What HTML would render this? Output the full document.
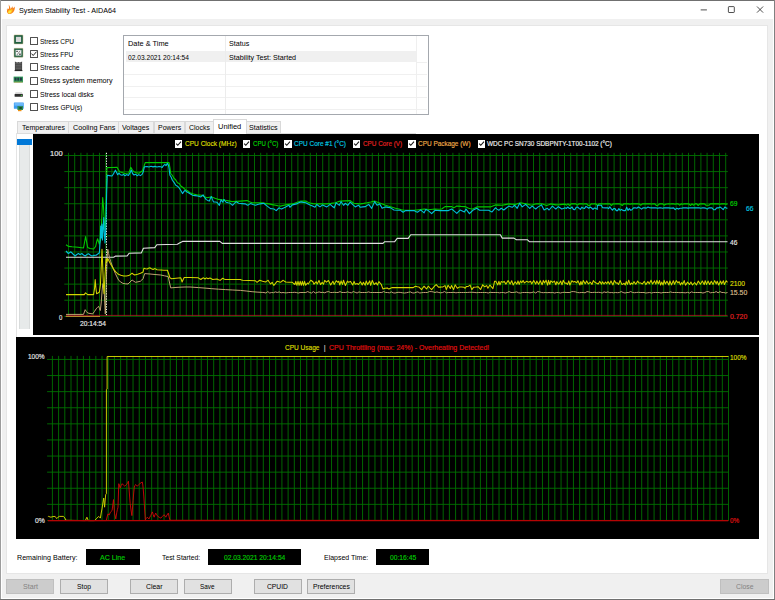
<!DOCTYPE html>
<html lang="en"><head><meta charset="utf-8"><title>System Stability Test - AIDA64</title>
<style>
html,body{margin:0;padding:0}
body{width:775px;height:600px;overflow:hidden;position:relative;background:#f0f0f0;font-family:"Liberation Sans",sans-serif;font-size:7.9px;color:#000}
div,span,svg{position:absolute;box-sizing:border-box}
.t{white-space:pre;line-height:10px;height:10px;transform-origin:0 0}
.k{-webkit-text-stroke:0.18px currentColor}
.btn{background:#e1e1e1;border:1px solid #adadad}
.btn.dis{background:#cccccc;border-color:#bfbfbf}
.cb{width:7.9px;height:7.9px;left:29.75px;background:#fff;border:0.7px solid #505050;border-radius:0.5px}
.lcb{width:7.2px;height:7.2px;top:140.4px;background:#fff}
.tab{top:120.9px;height:12.6px;background:#f0f0f0;border:1px solid #d9d9d9;border-bottom:none}
.blk{background:#000}
.hl{left:124.3px;width:303px;height:0.9px;background:#f0f0f0}

</style></head><body>
<div id="titlebar" style="left:1px;top:1px;width:773px;height:17.8px;background:#fff"></div>
<svg id="appicon" style="left:6px;top:4px" width="10" height="11" viewBox="0 0 10 11">
<path d="M2.6 0.6 C3.6 2.2 4.6 3.2 4.4 5.0 C5.4 4.2 6.0 3.2 6.2 2.2 C6.6 3.0 6.9 3.6 6.9 4.4 C7.6 3.9 8.3 3.2 8.7 2.6 C9.2 5.4 8.2 8.2 5.6 9.6 C3.6 10.6 1.2 9.6 0.9 7.4 C0.8 6.6 1.2 6.0 1.6 5.6 C1.2 5.4 0.8 5.2 0.5 5.2 C1.4 4.4 2.4 4.6 2.9 5.0 C3.2 3.6 2.9 2.0 2.6 0.6 Z" fill="#f7801a"/>
<path d="M3.6 5.8 C4.6 5.4 5.6 5.2 6.6 5.4 C6.6 7.4 5.4 9.2 3.6 9.6 C2.4 9.8 1.6 8.8 1.8 7.8 C2.0 6.8 2.8 6.2 3.6 5.8 Z" fill="#ffc420"/>
<path d="M3.4 7.0 C4.0 6.6 4.8 6.6 5.2 6.8 C5.0 8.0 4.4 9.0 3.4 9.4 C2.6 9.4 2.2 8.8 2.4 8.2 C2.6 7.6 3.0 7.2 3.4 7.0 Z" fill="#ffe84a"/>
</svg>
<svg id="controls" style="left:695px;top:1px" width="79" height="18" viewBox="0 0 79 18">
<path d="M5.7 8.9 H11.9" stroke="#222" stroke-width="0.8" fill="none"/>
<rect x="33.4" y="5.6" width="5.9" height="5.9" rx="0.6" stroke="#222" stroke-width="0.8" fill="none"/>
<path d="M62.0 5.5 L68.1 11.6 M68.1 5.5 L62.0 11.6" stroke="#222" stroke-width="0.8" fill="none"/>
</svg>
<div id="panel" style="left:5.5px;top:25.2px;width:762.4px;height:548.9px;background:#fff;border:1px solid #e6e6e6"></div>
<svg id="icons" style="left:12px;top:32px" width="14" height="82" viewBox="12 32 14 82">
<rect x="14" y="34.9" width="9" height="9" rx="0.6" fill="#1f5f42" stroke="#c8b888" stroke-width="0.5"/>
<rect x="15.9" y="36.8" width="5.2" height="5.2" fill="#d9d9d9"/>
<rect x="14" y="48.3" width="9" height="8.9" rx="0.6" fill="#1f5f42" stroke="#c8b888" stroke-width="0.5"/>
<rect x="15.6" y="49.9" width="5.8" height="5.7" fill="#f4f4f4"/>
<path d="M16.3 50.7 h1.5 v1.4 h-1.5 z M19.2 53.4 h1.5 v1.5 h-1.5 z" fill="#444"/><path d="M20.3 50.6 L16.9 55.0" stroke="#444" stroke-width="0.6" fill="none"/>
<path d="M14.9 61.6 L17 62.6 L18.5 62 L20 62.6 L22.1 61.6 V70.9 H14.9 Z" fill="#4a4a4a"/>
<rect x="15.6" y="63.4" width="5.8" height="6.4" fill="#6a6a6a"/>
<path d="M15.2 64.6 H21.8 M15.2 66.2 H21.8 M15.2 67.8 H21.8 M15.2 69.4 H21.8" stroke="#333" stroke-width="0.6"/>
<rect x="14.6" y="70.2" width="7.8" height="0.9" fill="#222"/>
<rect x="13.6" y="76.6" width="9.4" height="5.9" fill="#2f9a5a"/>
<rect x="14.6" y="77.6" width="1.9" height="3" fill="#234"/>
<rect x="17.3" y="77.6" width="1.9" height="3" fill="#234"/>
<rect x="20" y="77.6" width="1.9" height="3" fill="#234"/>
<path d="M14 82.2 H22.6" stroke="#c8a040" stroke-width="0.6"/>
<path d="M15.6 92.2 H21.9 L22.85 94.2 H14.6 Z" fill="#d4d4d4"/>
<rect x="14.6" y="94.1" width="8.25" height="2.7" rx="0.5" fill="#2e2e2e"/>
<rect x="20.8" y="94.9" width="1.2" height="1" fill="#40d040"/>
<rect x="13.85" y="102.4" width="9.9" height="6.4" rx="0.5" fill="#3a9cf0"/>
<rect x="14.5" y="103" width="8.6" height="2.6" fill="#6cb8fa"/>
<rect x="17.4" y="106.1" width="5.6" height="3.9" fill="#2c8a50"/>
<rect x="19.4" y="107" width="2.4" height="2" fill="#1d4a30"/>
<rect x="18" y="109.9" width="3.5" height="1.3" fill="#f09010"/>
</svg>
<div class="cb" style="top:36.80px"></div>
<div class="cb" style="top:50.10px"></div>
<div class="cb" style="top:63.40px"></div>
<div class="cb" style="top:76.70px"></div>
<div class="cb" style="top:90.00px"></div>
<div class="cb" style="top:103.30px"></div>
<svg style="left:29.75px;top:50.1px" width="8" height="8" viewBox="0 0 8 8"><path d="M1.5 3.6 L3.2 5.5 L6.5 1.7" stroke="#1a1a1a" stroke-width="0.95" fill="none"/></svg>
<div id="list" style="left:123.3px;top:35.2px;width:306px;height:79.7px;background:#fff;border:1px solid #a4a8ae"></div>
<div style="left:126.4px;top:51.2px;width:289.6px;height:11.3px;background:#f0f0f0"></div>
<div class="hl" style="top:74.3px"></div>
<div class="hl" style="top:85.9px"></div>
<div class="hl" style="top:97.4px"></div>
<div class="hl" style="top:109.1px"></div>
<div style="left:225px;top:36.2px;width:0.9px;height:77.6px;background:#ececec"></div>
<div style="left:416.1px;top:36.2px;width:0.9px;height:77.6px;background:#efefef"></div>
<div style="left:417px;top:62.3px;width:10px;height:0.9px;background:#f0f0f0"></div>
<div class="tab" style="left:17.2px;width:51.9px"></div>
<div class="tab" style="left:68.2px;width:51.1px"></div>
<div class="tab" style="left:118.4px;width:36.0px"></div>
<div class="tab" style="left:153.5px;width:31.9px"></div>
<div class="tab" style="left:184.5px;width:29.9px"></div>
<div class="tab" style="left:246.4px;width:34.2px"></div>
<div style="left:16.3px;top:133.2px;width:400px;height:0.9px;background:#dcdcdc"></div>
<div style="left:16.3px;top:133.2px;width:0.9px;height:204px;background:#e4e4e4"></div>
<div style="left:212.6px;top:118.9px;width:34.6px;height:15.2px;background:#fff;border:1px solid #d9d9d9;border-bottom:none"></div>
<div style="left:19px;top:139px;width:11px;height:190.3px;background:#e7eaea;border-left:0.6px solid #d9dcdc;border-right:0.6px solid #d9dcdc"></div>
<div style="left:17.1px;top:139px;width:14.6px;height:6px;background:#0078d7"></div>
<div class="blk" style="left:33.4px;top:134px;width:725.4px;height:200.8px"></div>
<svg id="chart1" style="left:33px;top:134px" width="726" height="201" viewBox="33 134 726 201">
<path d="M68.50 152.8V316.3M74.70 152.8V316.3M80.90 152.8V316.3M87.10 152.8V316.3M93.30 152.8V316.3M99.50 152.8V316.3M105.70 152.8V316.3M111.90 152.8V316.3M118.10 152.8V316.3M124.30 152.8V316.3M130.50 152.8V316.3M136.70 152.8V316.3M142.90 152.8V316.3M149.10 152.8V316.3M155.30 152.8V316.3M161.50 152.8V316.3M167.70 152.8V316.3M173.90 152.8V316.3M180.10 152.8V316.3M186.30 152.8V316.3M192.50 152.8V316.3M198.70 152.8V316.3M204.90 152.8V316.3M211.10 152.8V316.3M217.30 152.8V316.3M223.50 152.8V316.3M229.70 152.8V316.3M235.90 152.8V316.3M242.10 152.8V316.3M248.30 152.8V316.3M254.50 152.8V316.3M260.70 152.8V316.3M266.90 152.8V316.3M273.10 152.8V316.3M279.30 152.8V316.3M285.50 152.8V316.3M291.70 152.8V316.3M297.90 152.8V316.3M304.10 152.8V316.3M310.30 152.8V316.3M316.50 152.8V316.3M322.70 152.8V316.3M328.90 152.8V316.3M335.10 152.8V316.3M341.30 152.8V316.3M347.50 152.8V316.3M353.70 152.8V316.3M359.90 152.8V316.3M366.10 152.8V316.3M372.30 152.8V316.3M378.50 152.8V316.3M384.70 152.8V316.3M390.90 152.8V316.3M397.10 152.8V316.3M403.30 152.8V316.3M409.50 152.8V316.3M415.70 152.8V316.3M421.90 152.8V316.3M428.10 152.8V316.3M434.30 152.8V316.3M440.50 152.8V316.3M446.70 152.8V316.3M452.90 152.8V316.3M459.10 152.8V316.3M465.30 152.8V316.3M471.50 152.8V316.3M477.70 152.8V316.3M483.90 152.8V316.3M490.10 152.8V316.3M496.30 152.8V316.3M502.50 152.8V316.3M508.70 152.8V316.3M514.90 152.8V316.3M521.10 152.8V316.3M527.30 152.8V316.3M533.50 152.8V316.3M539.70 152.8V316.3M545.90 152.8V316.3M552.10 152.8V316.3M558.30 152.8V316.3M564.50 152.8V316.3M570.70 152.8V316.3M576.90 152.8V316.3M583.10 152.8V316.3M589.30 152.8V316.3M595.50 152.8V316.3M601.70 152.8V316.3M607.90 152.8V316.3M614.10 152.8V316.3M620.30 152.8V316.3M626.50 152.8V316.3M632.70 152.8V316.3M638.90 152.8V316.3M645.10 152.8V316.3M651.30 152.8V316.3M657.50 152.8V316.3M663.70 152.8V316.3M669.90 152.8V316.3M676.10 152.8V316.3M682.30 152.8V316.3M688.50 152.8V316.3M694.70 152.8V316.3M700.90 152.8V316.3M707.10 152.8V316.3M713.30 152.8V316.3M719.50 152.8V316.3M725.70 152.8V316.3" stroke="#007000" stroke-width="0.9" fill="none"/>
<path d="M64.3 155.50H727.8M64.3 171.58H727.8M64.3 187.66H727.8M64.3 203.74H727.8M64.3 219.82H727.8M64.3 235.90H727.8M64.3 251.98H727.8M64.3 268.06H727.8M64.3 284.14H727.8M64.3 300.22H727.8M64.3 316.30H727.8" stroke="#007000" stroke-width="0.9" fill="none"/>
<path d="M65.7 316.5H100" stroke="#c89030" stroke-width="0.9" fill="none"/>
<path d="M106.5 152.8V316" stroke="#f0f0f0" stroke-width="1" stroke-dasharray="1.3 1.3" fill="none"/>
<polyline points="66.0,315.4 727.5,315.4" stroke="#b01426" stroke-width="0.8" fill="none" stroke-linejoin="round" />
<polyline points="66.0,257.3 113.7,257.3 115.4,256.1 127.1,256.0 129.1,253.2 141.4,252.9 143.4,248.2 154.8,247.6 156.8,244.7 177.4,244.2 179.5,243.0 182.5,241.4 219.9,241.4 222.2,243.4 383.0,243.4 384.7,241.7 394.7,241.7 397.2,238.4 408.2,238.4 410.7,234.7 500.4,234.7 502.1,238.1 513.9,238.1 516.4,239.7 527.3,239.7 529.3,241.7 727.5,241.7" stroke="#e0e0e0" stroke-width="1.1" fill="none" stroke-linejoin="round" />
<polyline points="66.0,314.4 83.5,314.4 84.4,312.0 85.2,309.7 86.4,311.6 87.7,313.0 90.0,313.5 92.7,313.9 94.4,311.6 96.1,308.9 97.4,307.5 98.6,306.3 99.5,308.6 100.3,310.5 101.2,303.0 102.0,292.0 102.8,283.7 103.4,284.5 104.0,285.4 104.6,300.0 105.3,313.9 105.9,298.0 106.5,275.0 107.1,258.0 107.8,249.3 108.6,253.5 109.5,257.7 110.7,261.6 112.0,265.2 113.7,269.5 115.4,273.6 117.0,277.0 118.7,280.3 120.8,282.0 122.9,283.4 125.5,283.8 128.0,284.0 130.0,282.0 132.1,280.0 133.8,281.2 135.5,282.3 138.0,281.8 140.5,281.2 141.8,280.0 143.1,278.7 143.9,276.0 144.7,273.6 150.0,274.0 155.0,274.5 160.7,275.0 164.5,275.8 168.2,276.6 169.4,282.0 170.7,287.9 175.0,287.5 180.0,287.2 185.0,287.0 190.0,287.0 198.4,287.6 205.0,288.1 211.8,288.7 218.5,289.2 225.3,289.6 232.8,290.0 240.4,290.4 246.2,291.0 252.1,291.7 257.1,292.1 262.2,292.4 264.0,292.5 265.9,293.0 267.8,291.6 269.7,293.0 271.6,292.5 273.5,292.7 275.4,291.9 277.3,292.5 279.2,291.9 281.1,292.8 283.0,292.5 284.9,292.8 286.8,292.8 288.7,292.5 290.6,292.5 292.5,292.5 294.4,292.3 296.3,292.5 298.2,293.0 300.1,292.5 302.0,292.5 303.9,292.5 305.8,292.5 307.7,291.6 309.6,292.5 311.5,293.0 313.4,291.6 315.3,293.0 317.2,292.5 319.1,291.9 321.0,292.5 322.9,292.3 324.8,292.8 326.7,291.9 328.6,291.6 330.5,292.5 332.4,292.5 334.3,292.3 336.2,292.5 338.1,292.5 340.0,291.6 341.9,292.5 343.8,292.5 345.7,292.5 347.6,291.9 349.5,292.5 351.4,292.8 353.3,291.6 355.2,292.3 357.1,293.0 359.0,291.9 360.9,292.5 362.8,292.5 364.7,292.5 366.6,292.5 368.5,291.9 370.4,292.5 372.3,292.5 374.2,292.5 376.1,292.5 378.0,292.5 379.9,292.5 381.8,292.5 383.7,291.6 385.6,292.5 387.5,292.5 389.4,292.8 391.3,291.9 393.2,292.8 395.1,293.0 397.0,292.5 398.9,292.3 400.8,292.5 402.7,292.8 404.6,293.0 406.5,292.7 408.4,292.3 410.3,291.9 412.2,292.8 414.1,293.0 416.0,292.3 417.9,291.9 419.8,293.0 421.7,292.7 423.6,292.5 425.5,292.5 427.4,292.5 429.3,291.6 431.2,291.6 433.1,291.9 435.0,292.5 436.9,291.9 438.8,292.5 440.7,292.8 442.6,292.5 444.5,291.6 446.4,292.8 448.3,292.5 450.2,292.5 452.1,292.5 454.0,292.3 455.9,292.8 457.8,292.5 459.7,292.5 461.6,292.5 463.5,292.5 465.4,292.5 467.3,292.5 469.2,292.3 471.1,292.3 473.0,292.3 474.9,292.5 476.8,292.7 478.7,292.5 480.6,292.5 482.5,292.5 484.4,292.5 486.3,292.5 488.2,293.0 490.1,292.3 492.0,292.5 493.9,292.5 495.8,292.5 497.7,292.5 499.6,292.8 501.5,292.5 503.4,292.5 505.3,293.0 507.2,292.5 509.1,291.6 511.0,292.5 512.9,292.5 514.8,292.3 516.7,291.9 518.6,292.8 520.5,293.0 522.4,292.5 524.3,292.5 526.2,292.5 528.1,292.5 530.0,292.8 531.9,292.5 533.8,291.9 535.7,293.0 537.6,291.6 539.5,291.9 541.4,292.5 543.3,292.7 545.2,292.5 547.1,292.7 549.0,292.5 550.9,292.7 552.8,292.5 554.7,293.0 556.6,292.5 558.5,292.5 560.4,293.0 562.3,292.5 564.2,292.3 566.1,292.5 568.0,292.5 569.9,292.5 571.8,291.6 573.7,291.6 575.6,291.9 577.5,292.5 579.4,292.7 581.3,292.5 583.2,292.5 585.1,292.8 587.0,291.6 588.9,291.9 590.8,292.5 592.7,292.5 594.6,292.3 596.5,292.5 598.4,292.3 600.3,292.5 602.2,293.0 604.1,291.9 606.0,292.5 607.9,291.9 609.8,292.7 611.7,292.5 613.6,292.8 615.5,292.5 617.4,292.7 619.3,292.5 621.2,291.6 623.1,292.5 625.0,293.0 626.9,292.5 628.8,292.5 630.7,291.6 632.6,292.5 634.5,292.7 636.4,292.5 638.3,292.3 640.2,292.5 642.1,292.5 644.0,292.5 645.9,293.0 647.8,292.7 649.7,292.5 651.6,293.0 653.5,292.5 655.4,292.5 657.3,292.5 659.2,292.5 661.1,293.0 663.0,292.5 664.9,292.5 666.8,292.5 668.7,292.5 670.6,291.9 672.5,292.5 674.4,292.5 676.3,292.5 678.2,292.5 680.1,292.7 682.0,292.5 683.9,292.7 685.8,292.8 687.7,292.3 689.6,293.0 691.5,291.9 693.4,292.5 695.3,292.5 697.2,292.5 699.1,292.5 701.0,292.5 702.9,293.0 704.8,292.5 706.7,291.6 708.6,291.6 710.5,292.8 712.4,292.5 714.3,292.5 716.2,291.6 718.1,292.8 720.0,291.6 721.9,292.5 723.8,292.5 725.7,293.0 727.5,292.5" stroke="#c8aa78" stroke-width="0.95" fill="none" stroke-linejoin="round" />
<polyline points="66.0,294.6 84.3,294.6 85.5,292.9 87.7,294.6 93.6,294.6 94.6,288.0 95.2,279.5 95.9,288.0 96.6,293.8 98.0,293.0 99.4,292.0 100.4,285.0 101.2,268.0 102.0,249.3 102.8,268.0 103.4,284.0 104.0,293.8 104.6,283.0 105.2,272.0 106.1,258.5 106.8,262.0 107.8,258.5 109.0,261.0 110.3,263.6 112.0,266.5 113.7,269.4 115.8,271.8 117.9,274.0 120.8,275.2 123.8,276.1 126.3,275.9 128.8,275.6 130.5,274.4 132.1,273.3 133.4,274.2 134.7,275.0 137.6,274.2 140.5,273.3 143.1,272.0 143.9,268.3 145.5,268.8 147.2,269.0 148.5,268.3 149.8,267.8 151.4,268.7 153.1,269.4 155.0,268.6 157.0,269.8 160.7,270.0 164.0,270.2 167.4,270.3 168.6,273.5 169.9,277.8 171.6,278.7 176.0,278.2 180.8,277.8 181.5,280.0 182.1,282.0 183.2,279.5 184.2,277.5 190.0,277.6 198.4,277.8 199.6,278.8 200.9,279.5 202.2,278.4 203.5,277.8 205.0,279.0 206.5,277.9 208.0,278.8 210.0,278.0 212.7,279.5 214.8,279.2 216.9,279.0 218.6,279.8 220.2,280.3 221.5,279.2 222.8,278.3 224.0,279.0 225.3,279.5 232.0,279.5 240.4,279.5 241.6,280.0 242.9,280.3 249.0,280.5 255.5,280.8 256.3,281.6 257.1,282.3 258.4,281.2 259.7,280.3 262.6,281.2 265.5,282.0 266.8,281.1 268.1,280.3 269.3,282.2 270.6,284.0 271.4,283.1 272.2,282.3 273.0,283.9 273.9,285.4 275.6,283.2 277.3,281.2 279.0,281.8 280.6,282.3 281.9,281.2 283.2,280.3 284.4,281.2 285.7,282.0 289.0,282.2 292.4,282.3 293.6,283.5 294.9,284.5 295.8,281.3 296.9,285.3 298.0,281.3 299.1,285.3 300.2,281.3 301.3,285.3 302.4,281.3 303.5,285.3 304.6,281.3 305.7,285.3 307.4,283.0 308.3,284.0 309.5,282.0 310.8,280.3 312.9,281.8 314.0,284.2 316.2,281.7 317.2,284.0 319.0,280.4 320.5,284.6 322.2,282.4 323.5,284.3 324.7,280.4 326.4,282.1 328.5,280.5 330.7,285.0 332.9,281.3 334.1,284.4 336.3,280.7 337.8,282.3 338.8,281.2 339.8,285.0 341.1,281.0 342.5,284.4 343.5,280.2 345.4,285.5 347.4,281.1 348.4,282.3 350.6,281.4 352.7,285.0 354.1,281.4 355.2,284.2 357.3,283.6 358.4,284.5 360.5,281.7 362.2,285.0 363.4,282.3 365.2,285.2 366.2,281.0 367.7,284.6 369.7,280.9 370.7,285.4 372.3,280.4 374.2,284.5 376.2,282.7 377.4,285.0 378.9,281.6 381.3,284.5 382.2,287.0 383.0,289.0 385.0,288.3 387.2,287.9 388.0,288.5 388.9,289.0 390.5,288.2 392.2,287.6 400.0,287.6 413.2,287.6 414.5,286.8 415.7,286.2 417.3,286.7 419.0,287.0 420.3,288.4 421.6,289.6 422.8,287.8 424.1,286.2 425.3,287.7 426.6,289.0 427.4,287.5 428.3,286.2 430.0,288.0 431.6,289.6 433.3,287.6 435.0,285.7 436.2,284.6 438.5,287.1 440.9,287.1 442.9,286.9 445.0,285.6 446.3,289.5 448.1,285.3 450.3,288.5 451.5,285.5 453.6,289.6 455.1,284.8 457.3,288.3 459.7,286.9 461.5,286.9 463.9,287.2 465.1,288.3 466.5,286.4 468.3,286.4 470.1,285.1 471.8,289.6 473.7,287.2 476.2,287.1 478.1,286.7 480.6,289.5 482.7,284.8 484.7,286.8 486.7,285.6 487.9,288.3 489.9,285.0 492.9,288.7 493.8,285.0 494.6,281.2 495.8,281.2 497.8,284.9 498.9,281.3 500.0,284.9 501.3,281.5 503.0,282.4 504.1,281.4 506.0,284.1 508.1,280.6 510.1,284.1 511.7,280.7 513.2,285.0 515.1,281.7 516.9,284.1 518.0,280.9 519.2,284.4 520.4,281.1 521.8,282.7 523.1,280.5 524.4,282.9 526.6,281.3 528.6,282.2 530.6,281.2 531.7,283.9 533.7,280.5 535.7,284.1 536.8,281.1 538.6,284.3 540.3,280.7 542.1,284.8 543.3,280.4 544.5,282.9 546.1,280.3 547.6,285.1 548.5,280.4 549.8,284.3 550.8,280.8 552.8,282.5 554.3,281.0 555.9,284.8 556.8,281.6 558.7,284.2 560.7,281.1 562.0,284.8 563.2,280.3 564.6,283.1 566.3,283.1 567.5,284.4 568.8,280.9 569.9,285.0 571.9,280.7 573.3,282.1 574.7,281.5 576.8,282.8 577.9,280.7 579.9,285.0 580.9,281.5 582.0,284.6 583.3,280.5 585.2,283.8 586.7,280.9 588.4,283.9 590.4,282.2 592.0,284.4 593.3,280.6 594.4,282.0 596.2,283.0 598.2,284.0 599.7,281.4 601.5,284.1 602.5,281.7 604.0,284.0 605.5,282.0 606.8,283.8 608.0,281.5 609.5,284.1 611.0,280.9 613.0,284.9 614.4,280.5 616.1,283.2 617.2,282.8 618.5,284.5 620.1,280.5 622.0,284.6 624.1,283.2 625.2,285.0 626.2,281.6 627.5,284.3 628.7,280.2 630.2,284.7 631.4,283.0 632.8,284.1 633.9,281.6 635.8,284.2 637.7,281.1 638.9,283.0 640.6,282.9 642.3,284.0 644.3,281.4 645.8,284.6 647.9,281.6 649.3,283.8 651.0,280.3 652.6,284.0 654.5,280.9 655.9,284.1 656.9,280.4 658.3,283.7 659.5,280.6 660.6,285.1 661.7,282.1 663.1,285.0 664.1,280.3 665.3,283.9 667.0,281.3 668.9,285.0 669.9,281.0 671.5,284.9 673.3,280.8 674.6,284.3 676.2,280.6 678.0,282.9 679.1,281.6 680.4,284.9 681.7,282.6 682.7,284.3 684.2,280.6 685.5,285.2 687.6,282.1 689.5,284.5 690.9,282.0 692.5,285.0 694.6,282.5 696.4,285.0 698.3,281.1 700.4,284.3 702.3,281.0 704.2,284.6 705.2,280.7 706.6,284.4 708.0,281.1 709.7,284.5 711.3,281.3 713.1,284.4 714.7,280.6 716.2,283.9 717.2,281.3 718.7,285.0 720.6,281.1 721.6,284.0 723.4,280.8 724.4,284.5 726.2,280.8 727.5,282.4" stroke="#d4d400" stroke-width="1.05" fill="none" stroke-linejoin="round" />
<polyline points="66.0,244.8 68.4,246.4 72.0,246.8 78.0,247.2 83.5,248.0 85.6,236.5 87.7,247.6 90.0,248.5 93.6,249.0 95.6,246.5 96.6,242.0 97.6,238.7 98.5,241.5 99.3,244.0 100.6,240.0 101.6,222.0 102.7,197.5 103.5,207.0 104.3,222.0 105.0,230.0 105.8,215.0 106.4,192.0 106.9,167.6 112.0,167.5 117.0,167.3 119.6,171.8 122.0,172.6 124.6,173.5 128.8,173.0 130.8,167.3 132.2,169.5 133.8,171.8 136.0,172.6 138.9,173.2 142.2,171.0 143.8,167.0 145.2,162.6 150.0,162.6 158.0,162.6 165.0,162.6 169.0,162.6 170.0,168.0 170.7,173.5 172.4,175.5 174.0,178.2 175.8,180.0 177.4,182.7 179.2,183.5 180.8,186.0 183.0,187.5 185.0,189.4 187.5,190.8 190.0,192.7 193.5,194.0 196.7,194.9 201.8,195.2 204.0,196.6 206.8,197.7 209.5,197.2 211.8,196.9 215.0,198.2 218.6,199.4 222.0,199.9 225.3,200.2 228.6,200.9 232.0,201.6 236.0,201.4 240.4,201.1 243.5,200.9 247.1,200.6 249.5,201.8 252.1,202.8 257.0,202.8 262.2,202.8 265.5,203.4 268.9,203.9 272.2,204.6 275.6,205.3 278.0,205.8 280.6,206.1 283.0,205.5 285.7,204.9 289.0,204.4 292.4,203.9 296.6,202.5 300.8,201.1 303.3,201.1 305.8,201.1 308.0,202.2 310.0,203.0 313.0,203.6 316.7,203.9 321.0,203.9 326.8,203.9 331.0,203.4 335.2,202.8 337.6,201.9 340.2,201.1 345.0,200.9 350.3,200.6 352.0,202.0 353.6,203.3 357.0,203.6 360.3,203.9 363.6,203.4 367.0,202.8 370.8,202.0 374.6,201.1 377.5,202.2 380.5,203.3 383.0,204.3 385.5,205.3 388.8,206.3 392.2,207.3 395.5,208.2 398.9,209.0 401.5,209.7 404.0,210.3 409.0,210.3 414.0,210.3 419.0,209.7 424.1,209.0 427.5,209.3 430.8,209.5 435.0,209.0 438.0,209.3 441.7,209.0 443.4,207.8 445.0,206.6 448.4,206.6 451.8,206.6 453.5,207.8 455.2,207.0 456.8,206.1 461.0,206.4 465.2,206.6 467.0,207.5 468.6,208.3 470.7,208.7 472.8,209.0 474.8,208.0 476.9,206.9 483.6,206.9 490.4,206.9 492.9,205.9 495.4,204.9 498.8,205.1 502.1,205.3 505.4,204.6 508.8,203.9 512.2,204.2 515.5,204.4 518.0,203.6 520.6,202.8 523.5,203.4 526.4,203.9 529.0,204.6 531.5,205.3 533.6,204.6 535.7,203.9 539.0,203.9 542.4,203.9 544.5,204.8 546.6,205.6 548.7,204.8 550.8,203.9 553.3,204.4 555.8,204.9 560.0,204.6 565.0,204.1 566.5,205.2 568.0,203.9 569.6,205.5 571.1,203.9 572.7,203.9 574.2,203.9 575.8,203.9 577.3,205.2 578.9,203.9 580.4,203.9 582.0,203.9 583.5,204.0 585.1,203.9 586.6,203.9 588.2,205.5 589.7,205.5 591.3,203.9 592.8,204.0 594.4,203.9 595.9,203.9 597.5,205.5 599.0,203.9 600.6,203.9 602.1,203.9 603.7,204.0 605.2,203.9 606.8,203.9 608.3,203.9 609.9,203.9 611.4,205.5 613.0,203.9 614.5,204.0 616.1,203.9 617.6,203.9 619.2,203.9 620.7,204.2 622.3,205.5 623.8,203.9 625.4,203.9 626.9,203.9 628.5,203.9 630.0,204.2 631.6,203.9 633.1,203.9 634.7,203.9 636.2,203.9 637.8,203.9 639.3,204.0 640.9,205.2 642.4,203.9 644.0,203.9 645.5,203.9 647.1,203.9 648.6,203.9 650.2,203.9 651.7,204.0 653.3,203.9 654.8,203.9 656.4,205.5 657.9,205.2 659.5,203.9 661.0,203.9 662.6,203.9 664.1,205.2 665.7,204.2 667.2,204.0 668.8,203.9 670.3,204.0 671.9,203.9 673.4,203.9 675.0,204.2 676.5,203.9 678.1,203.9 679.6,205.2 681.2,203.9 682.7,204.2 684.3,203.9 685.8,203.9 687.4,203.9 688.9,203.9 690.5,205.5 692.0,203.9 693.6,205.2 695.1,203.9 696.7,203.9 698.2,205.5 699.8,203.9 701.3,203.9 702.9,203.9 704.4,203.9 706.0,205.2 707.5,205.2 709.1,205.2 710.6,203.9 712.2,203.9 713.7,203.9 715.3,203.9 716.8,203.9 718.4,203.9 719.9,204.2 721.5,203.9 723.0,203.9 724.6,203.9 726.1,204.2 727.5,203.9" stroke="#00c800" stroke-width="1.1" fill="none" stroke-linejoin="round" />
<polyline points="66.0,251.0 68.4,253.5 70.9,251.8 73.0,254.0 75.1,256.0 76.8,254.5 78.5,253.5 80.0,254.6 81.8,253.5 83.5,255.0 85.2,256.0 86.8,254.6 88.5,253.8 90.2,255.0 91.9,256.0 94.0,255.4 96.1,255.2 97.8,254.0 99.4,252.7 100.2,240.0 100.7,226.0 101.3,238.0 101.9,224.0 102.5,240.0 103.1,228.0 103.7,217.5 104.3,232.0 105.0,243.0 105.6,232.0 106.2,215.0 106.6,195.0 107.2,175.2 109.5,175.6 112.0,176.0 113.4,174.0 115.4,170.2 116.6,172.6 117.6,174.8 119.0,173.0 120.4,174.8 122.0,175.2 123.6,174.4 125.0,175.8 126.6,174.6 128.4,175.4 130.0,173.0 131.3,170.0 132.6,173.5 134.0,175.0 135.6,174.2 137.2,175.8 138.8,174.6 140.4,175.6 142.0,174.4 143.2,172.0 144.4,166.8 147.0,166.5 149.0,167.0 151.0,166.3 153.0,166.9 155.0,166.4 157.0,167.0 159.0,166.5 160.7,166.8 162.2,167.4 163.5,165.6 164.9,164.3 166.0,165.6 167.4,163.4 168.4,165.0 169.0,168.0 169.9,175.2 171.2,177.2 172.4,180.2 174.0,182.4 175.8,185.2 177.5,186.2 179.1,187.8 180.8,190.5 182.5,193.6 183.8,191.6 185.0,190.3 187.0,192.0 188.4,192.7 190.5,194.0 192.6,195.2 195.0,195.6 197.6,196.0 199.3,196.4 200.9,196.9 202.0,195.8 203.1,194.9 204.5,197.2 206.0,199.4 207.6,200.4 209.3,201.1 210.3,198.6 211.3,196.5 212.4,199.4 213.5,201.9 215.2,202.0 216.9,202.2 218.2,203.8 219.4,205.3 220.2,202.4 221.1,199.9 222.0,201.2 222.8,202.2 223.4,200.6 223.9,199.4 225.0,201.0 226.1,202.2 228.2,202.8 230.3,203.3 231.4,204.4 232.5,205.3 234.4,203.4 236.2,201.6 237.5,202.6 238.7,203.3 242.0,203.6 245.4,203.9 246.7,204.7 247.9,205.3 249.2,204.4 250.4,203.6 253.0,204.5 255.5,205.3 257.6,204.6 259.7,203.9 261.8,203.6 263.9,203.3 265.5,204.8 267.2,206.1 268.9,207.4 270.6,208.6 272.2,208.8 273.9,209.0 275.2,209.9 276.4,210.6 277.7,209.2 279.0,207.8 280.2,208.4 281.5,209.0 283.6,207.9 285.7,206.9 287.4,206.0 289.0,205.3 289.5,206.4 289.9,207.3 291.2,206.0 292.4,204.9 294.5,204.4 296.6,203.9 298.7,202.8 300.8,201.9 303.3,202.4 305.8,202.8 308.0,203.9 310.0,204.9 312.5,206.0 315.0,207.3 315.9,205.8 316.7,204.4 318.4,205.7 320.0,206.9 321.3,205.9 322.6,204.9 324.7,205.9 326.8,206.9 328.5,205.6 330.1,204.4 332.2,206.2 334.3,207.8 335.2,205.2 336.0,202.8 337.7,204.1 339.4,205.3 340.2,203.4 341.0,201.6 342.3,203.5 343.6,205.3 344.4,204.3 345.2,203.3 346.5,204.3 347.8,205.3 349.0,203.7 350.3,202.2 352.8,204.6 355.3,206.9 357.0,206.1 358.7,205.3 359.5,206.3 360.3,207.3 362.8,206.9 365.4,206.6 367.0,205.5 368.7,204.4 370.2,206.4 371.7,208.3 373.2,204.9 374.6,201.6 375.9,203.5 377.1,205.3 378.4,204.6 379.6,203.9 380.9,206.1 382.1,208.3 383.8,207.6 385.5,206.9 388.0,207.4 390.5,207.8 392.2,208.9 393.9,210.0 397.2,210.2 400.6,210.3 401.8,211.3 403.1,212.3 404.4,211.4 405.6,210.6 409.8,210.6 414.0,210.6 415.7,211.5 417.4,212.3 419.0,211.1 420.7,210.0 422.4,211.4 424.1,212.8 425.0,211.1 425.8,209.5 427.0,210.1 428.3,210.6 430.0,212.2 431.6,213.7 433.3,212.0 435.0,210.3 437.5,210.5 440.0,210.6 444.0,210.6 448.4,210.6 450.1,209.8 451.8,209.0 454.3,211.2 456.8,213.3 458.5,211.6 460.2,210.0 462.3,211.0 464.4,212.0 465.2,210.5 466.0,209.0 467.7,211.4 469.4,213.7 471.1,212.0 472.8,210.3 474.8,209.3 476.9,208.3 478.2,209.3 479.5,210.3 484.0,210.3 488.7,210.3 490.4,211.2 492.0,212.0 493.7,209.9 495.4,207.8 497.1,209.1 498.8,210.3 500.0,209.3 501.3,208.3 502.6,209.2 503.8,210.0 506.3,208.0 508.8,206.1 510.5,206.7 512.2,207.3 513.4,206.3 514.7,205.3 516.0,206.8 517.2,208.3 518.4,205.8 519.7,203.3 521.0,205.1 522.2,206.9 523.9,205.6 525.6,204.4 527.7,206.4 529.8,208.3 531.0,207.2 532.3,206.1 534.0,207.6 535.7,209.0 537.0,207.9 538.2,206.9 539.9,205.9 541.5,204.9 542.8,207.5 544.1,210.0 545.8,209.1 547.4,208.3 548.2,209.2 549.1,210.0 550.8,208.0 552.4,206.1 554.1,207.6 555.8,209.0 557.0,207.8 558.3,206.6 560.0,207.8 561.7,209.0 563.4,208.4 565.0,207.8 566.4,208.4 567.8,207.0 569.2,208.4 570.6,208.4 572.0,207.0 573.4,209.4 574.8,209.8 576.2,207.2 577.6,207.0 579.0,208.4 580.4,209.4 581.8,207.2 583.2,208.3 584.6,208.4 586.0,206.4 587.4,207.2 588.8,208.3 590.2,207.0 591.6,208.0 593.0,209.4 594.4,208.0 595.8,208.4 597.2,209.4 597.4,205.5 599.0,205.3 601.3,205.3 602.6,207.8 605.0,207.9 607.7,207.9 608.6,208.6 609.8,206.8 611.1,208.6 612.4,210.2 613.7,208.6 615.0,208.6 616.3,210.6 617.6,210.6 618.9,208.6 620.2,210.4 621.5,209.4 622.8,210.4 624.1,210.6 625.4,210.6 626.7,207.2 628.0,210.4 629.3,208.6 630.6,210.2 632.0,209.7 633.6,207.9 635.2,207.7 636.8,208.2 638.4,207.0 640.0,207.9 641.6,209.1 643.2,207.7 644.8,207.9 646.4,208.1 648.0,207.0 649.6,207.7 651.2,207.9 652.8,207.9 654.4,207.9 656.0,207.9 657.6,208.2 659.2,207.9 660.8,207.7 662.4,208.2 664.0,207.9 665.6,207.9 667.2,207.9 668.8,207.9 670.4,208.1 672.0,208.1 673.6,207.9 675.2,209.7 676.8,208.2 678.4,209.1 680.0,208.2 681.6,208.2 683.2,207.9 684.8,207.9 686.4,207.9 688.0,208.1 689.6,207.9 691.2,207.7 692.8,207.9 694.4,207.9 696.0,207.7 697.6,207.9 699.2,207.9 700.8,208.2 702.4,207.9 704.0,207.9 705.6,208.1 707.2,209.1 708.8,207.9 710.4,207.9 712.0,207.9 713.6,209.7 715.2,209.7 716.8,207.9 718.4,207.9 720.0,207.0 721.6,208.1 723.2,209.7 724.8,207.0 726.4,208.1 727.5,208.2" stroke="#00c0d8" stroke-width="1.1" fill="none" stroke-linejoin="round" />
</svg>
<div class="lcb" style="left:174.8px"></div>
<svg style="left:174.8px;top:140.4px" width="7.2" height="7.2" viewBox="0 0 7.2 7.2"><path d="M1.2 3.6 L2.8 5.3 L6.0 1.7" stroke="#111" stroke-width="1.05" fill="none"/></svg>
<div class="lcb" style="left:243.0px"></div>
<svg style="left:243.0px;top:140.4px" width="7.2" height="7.2" viewBox="0 0 7.2 7.2"><path d="M1.2 3.6 L2.8 5.3 L6.0 1.7" stroke="#111" stroke-width="1.05" fill="none"/></svg>
<div class="lcb" style="left:284.4px"></div>
<svg style="left:284.4px;top:140.4px" width="7.2" height="7.2" viewBox="0 0 7.2 7.2"><path d="M1.2 3.6 L2.8 5.3 L6.0 1.7" stroke="#111" stroke-width="1.05" fill="none"/></svg>
<div class="lcb" style="left:352.6px"></div>
<svg style="left:352.6px;top:140.4px" width="7.2" height="7.2" viewBox="0 0 7.2 7.2"><path d="M1.2 3.6 L2.8 5.3 L6.0 1.7" stroke="#111" stroke-width="1.05" fill="none"/></svg>
<div class="lcb" style="left:408.4px"></div>
<svg style="left:408.4px;top:140.4px" width="7.2" height="7.2" viewBox="0 0 7.2 7.2"><path d="M1.2 3.6 L2.8 5.3 L6.0 1.7" stroke="#111" stroke-width="1.05" fill="none"/></svg>
<div class="lcb" style="left:478.1px"></div>
<svg style="left:478.1px;top:140.4px" width="7.2" height="7.2" viewBox="0 0 7.2 7.2"><path d="M1.2 3.6 L2.8 5.3 L6.0 1.7" stroke="#111" stroke-width="1.05" fill="none"/></svg>
<div class="blk" style="left:16.2px;top:337.4px;width:742.6px;height:201.2px"></div>
<svg id="chart2" style="left:16px;top:337px" width="743" height="202" viewBox="16 337 743 202">
<path d="M52.40 355.9V520.5M58.60 355.9V520.5M64.81 355.9V520.5M71.01 355.9V520.5M77.21 355.9V520.5M83.41 355.9V520.5M89.62 355.9V520.5M95.82 355.9V520.5M102.02 355.9V520.5M108.23 355.9V520.5M114.43 355.9V520.5M120.63 355.9V520.5M126.84 355.9V520.5M133.04 355.9V520.5M139.24 355.9V520.5M145.44 355.9V520.5M151.65 355.9V520.5M157.85 355.9V520.5M164.05 355.9V520.5M170.26 355.9V520.5M176.46 355.9V520.5M182.66 355.9V520.5M188.87 355.9V520.5M195.07 355.9V520.5M201.27 355.9V520.5M207.48 355.9V520.5M213.68 355.9V520.5M219.88 355.9V520.5M226.08 355.9V520.5M232.29 355.9V520.5M238.49 355.9V520.5M244.69 355.9V520.5M250.90 355.9V520.5M257.10 355.9V520.5M263.30 355.9V520.5M269.50 355.9V520.5M275.71 355.9V520.5M281.91 355.9V520.5M288.11 355.9V520.5M294.32 355.9V520.5M300.52 355.9V520.5M306.72 355.9V520.5M312.93 355.9V520.5M319.13 355.9V520.5M325.33 355.9V520.5M331.53 355.9V520.5M337.74 355.9V520.5M343.94 355.9V520.5M350.14 355.9V520.5M356.35 355.9V520.5M362.55 355.9V520.5M368.75 355.9V520.5M374.96 355.9V520.5M381.16 355.9V520.5M387.36 355.9V520.5M393.56 355.9V520.5M399.77 355.9V520.5M405.97 355.9V520.5M412.17 355.9V520.5M418.38 355.9V520.5M424.58 355.9V520.5M430.78 355.9V520.5M436.99 355.9V520.5M443.19 355.9V520.5M449.39 355.9V520.5M455.59 355.9V520.5M461.80 355.9V520.5M468.00 355.9V520.5M474.20 355.9V520.5M480.41 355.9V520.5M486.61 355.9V520.5M492.81 355.9V520.5M499.02 355.9V520.5M505.22 355.9V520.5M511.42 355.9V520.5M517.62 355.9V520.5M523.83 355.9V520.5M530.03 355.9V520.5M536.23 355.9V520.5M542.44 355.9V520.5M548.64 355.9V520.5M554.84 355.9V520.5M561.05 355.9V520.5M567.25 355.9V520.5M573.45 355.9V520.5M579.65 355.9V520.5M585.86 355.9V520.5M592.06 355.9V520.5M598.26 355.9V520.5M604.47 355.9V520.5M610.67 355.9V520.5M616.87 355.9V520.5M623.08 355.9V520.5M629.28 355.9V520.5M635.48 355.9V520.5M641.69 355.9V520.5M647.89 355.9V520.5M654.09 355.9V520.5M660.29 355.9V520.5M666.50 355.9V520.5M672.70 355.9V520.5M678.90 355.9V520.5M685.11 355.9V520.5M691.31 355.9V520.5M697.51 355.9V520.5M703.72 355.9V520.5M709.92 355.9V520.5M716.12 355.9V520.5M722.32 355.9V520.5M728.53 355.9V520.5" stroke="#007000" stroke-width="0.9" fill="none"/>
<path d="M47.1 359.45H728.5M47.1 375.55H728.5M47.1 391.65H728.5M47.1 407.75H728.5M47.1 423.85H728.5M47.1 439.95H728.5M47.1 456.05H728.5M47.1 472.15H728.5M47.1 488.25H728.5M47.1 504.35H728.5M47.1 520.45H728.5" stroke="#007000" stroke-width="0.9" fill="none"/>
<polyline points="47.9,516.6 48.4,516.4 50.9,517.2 53.0,516.6 55.1,516.4 56.7,518.6 58.0,517.2 59.3,516.4 63.5,516.4 64.8,518.0 66.0,520.3 85.3,520.6 86.9,517.2 88.3,520.6 94.5,520.6 96.2,518.9 98.7,516.4 100.4,518.1 101.2,513.0 102.0,508.9 102.9,503.0 103.7,498.0 104.2,503.0 104.6,507.2 105.2,500.0 105.7,494.6 106.4,493.8 106.4,389.5 107.1,389.0 107.1,356.5 728.5,356.5" stroke="#d2d200" stroke-width="0.95" fill="none" stroke-linejoin="round" />
<polyline points="47.9,520.6 106.2,520.6 107.9,513.9 109.2,515.0 110.4,512.2 112.1,510.5 112.8,505.0 113.5,499.6 114.0,507.0 114.6,513.9 115.2,516.0 115.8,518.9 116.8,512.2 117.4,509.5 118.0,507.2 118.4,495.0 118.8,483.7 119.5,486.0 120.2,487.9 121.2,485.5 122.2,483.7 123.5,485.2 124.7,486.2 126.0,484.8 127.2,483.7 127.8,482.4 128.4,481.2 128.9,487.0 129.5,495.0 130.2,503.8 131.0,510.0 131.9,515.6 132.5,508.0 133.1,500.5 133.7,493.0 134.3,487.0 135.0,485.5 135.6,484.5 136.4,485.5 137.3,486.2 138.5,484.8 139.8,483.7 141.0,482.8 142.3,482.0 142.8,485.0 143.2,488.7 143.8,496.0 144.3,503.8 144.8,512.0 145.3,519.8 146.3,518.4 147.3,517.2 148.2,518.2 149.0,518.9 149.8,517.2 150.7,515.6 151.5,513.7 152.4,511.9 153.2,514.6 154.1,517.2 154.9,515.0 155.7,513.1 156.7,514.8 157.8,516.4 159.3,517.3 160.8,518.1 162.4,516.4 164.1,514.7 165.0,516.0 165.8,517.2 167.0,515.0 168.3,513.1 169.1,516.8 170.0,520.3 728.5,520.6" stroke="#d20808" stroke-width="0.9" fill="none" stroke-linejoin="round" />
<path d="M47.9 520.6H728" stroke="#b40404" stroke-width="1.2" fill="none"/>
</svg>
<div class="blk" style="left:85.7px;top:548.8px;width:53.9px;height:15.9px"></div>
<div class="blk" style="left:207.8px;top:548.8px;width:93.3px;height:15.9px"></div>
<div class="blk" style="left:375.6px;top:548.8px;width:53.5px;height:15.9px"></div>
<div class="btn dis" style="left:6.2px;top:579.4px;width:48.3px;height:14.3px"></div>
<div class="btn" style="left:60.4px;top:579.4px;width:48.1px;height:14.3px"></div>
<div class="btn" style="left:129.6px;top:579.4px;width:48.8px;height:14.3px"></div>
<div class="btn" style="left:183.8px;top:579.4px;width:48.4px;height:14.3px"></div>
<div class="btn" style="left:253.5px;top:579.4px;width:48.1px;height:14.3px"></div>
<div class="btn" style="left:307.0px;top:579.4px;width:48.4px;height:14.3px"></div>
<div class="btn dis" style="left:719.8px;top:579.4px;width:49.1px;height:14.3px"></div>
<span class="t" style="left:18.50px;top:5.76px;transform:scaleX(0.911);">System Stability Test - AIDA64</span>
<span class="t" style="left:39.80px;top:36.56px;transform:scaleX(0.827);">Stress CPU</span>
<span class="t" style="left:39.80px;top:49.86px;transform:scaleX(0.825);">Stress FPU</span>
<span class="t" style="left:39.80px;top:63.16px;transform:scaleX(0.866);">Stress cache</span>
<span class="t" style="left:39.80px;top:76.46px;transform:scaleX(0.904);">Stress system memory</span>
<span class="t" style="left:39.80px;top:89.76px;transform:scaleX(0.883);">Stress local disks</span>
<span class="t" style="left:39.80px;top:103.06px;transform:scaleX(0.832);">Stress GPU(s)</span>
<span class="t" style="left:128.40px;top:38.96px;transform:scaleX(0.937);">Date &amp; Time</span>
<span class="t" style="left:229.00px;top:38.96px;transform:scaleX(0.907);">Status</span>
<span class="t" style="left:128.40px;top:52.56px;transform:scaleX(0.841);">02.03.2021 20:14:54</span>
<span class="t" style="left:229.00px;top:52.56px;transform:scaleX(0.907);">Stability Test: Started</span>
<span class="t" style="left:21.70px;top:122.66px;transform:scaleX(0.889);">Temperatures</span>
<span class="t" style="left:72.70px;top:122.66px;transform:scaleX(0.912);">Cooling Fans</span>
<span class="t" style="left:122.40px;top:122.66px;transform:scaleX(0.902);">Voltages</span>
<span class="t" style="left:157.80px;top:122.66px;transform:scaleX(0.882);">Powers</span>
<span class="t" style="left:188.80px;top:122.66px;transform:scaleX(0.882);">Clocks</span>
<span class="t" style="left:218.40px;top:121.66px;transform:scaleX(0.945);">Unified</span>
<span class="t" style="left:249.30px;top:122.66px;transform:scaleX(0.903);">Statistics</span>
<span class="t" style="left:16.50px;top:553.26px;transform:scaleX(0.902);">Remaining Battery:</span>
<span class="t k" style="left:100.10px;top:553.26px;color:#00c800;transform:scaleX(0.894);">AC Line</span>
<span class="t" style="left:162.00px;top:553.26px;transform:scaleX(0.862);">Test Started:</span>
<span class="t k" style="left:223.90px;top:553.26px;color:#00c800;transform:scaleX(0.847);">02.03.2021 20:14:54</span>
<span class="t" style="left:324.00px;top:553.26px;transform:scaleX(0.884);">Elapsed Time:</span>
<span class="t k" style="left:389.50px;top:553.26px;color:#00c800;transform:scaleX(0.853);">00:16:45</span>
<span class="t" style="left:22.80px;top:582.06px;color:#838383;transform:scaleX(0.900);">Start</span>
<span class="t" style="left:76.90px;top:582.06px;transform:scaleX(0.856);">Stop</span>
<span class="t" style="left:146.10px;top:582.06px;transform:scaleX(0.875);">Clear</span>
<span class="t" style="left:200.40px;top:582.06px;transform:scaleX(0.806);">Save</span>
<span class="t" style="left:266.90px;top:582.06px;transform:scaleX(0.855);">CPUID</span>
<span class="t" style="left:313.20px;top:582.06px;transform:scaleX(0.865);">Preferences</span>
<span class="t" style="left:735.80px;top:582.06px;color:#838383;transform:scaleX(0.867);">Close</span>
<span class="t k" style="left:184.60px;top:138.96px;color:#dcdc00;transform:scaleX(0.829);">CPU Clock (MHz)</span>
<span class="t k" style="left:252.70px;top:138.96px;color:#00d200;transform:scaleX(0.770);">CPU (°C)</span>
<span class="t k" style="left:294.00px;top:138.96px;color:#00c8e0;transform:scaleX(0.822);">CPU Core #1 (°C)</span>
<span class="t k" style="left:362.60px;top:138.96px;color:#e62020;transform:scaleX(0.805);">CPU Core (V)</span>
<span class="t k" style="left:418.40px;top:138.96px;color:#eeaa48;transform:scaleX(0.816);">CPU Package (W)</span>
<span class="t k" style="left:487.40px;top:138.96px;color:#f0f0f0;transform:scaleX(0.813);">WDC PC SN730 SDBPNTY-1T00-1102 (°C)</span>
<span class="t k" style="left:49.60px;top:148.76px;color:#e8e8e8;transform:scaleX(0.957);">100</span>
<span class="t k" style="left:58.70px;top:312.86px;color:#e8e8e8;transform:scaleX(0.752);">0</span>
<span class="t k" style="left:80.30px;top:319.06px;color:#e8e8e8;transform:scaleX(0.846);">20:14:54</span>
<span class="t k" style="left:729.75px;top:199.46px;color:#00d200;transform:scaleX(0.854);">69</span>
<span class="t k" style="left:746.00px;top:204.46px;color:#00c8e0;transform:scaleX(0.854);">66</span>
<span class="t k" style="left:729.70px;top:237.66px;color:#e6e6e6;transform:scaleX(0.831);">46</span>
<span class="t k" style="left:729.70px;top:278.66px;color:#dcdc00;transform:scaleX(0.854);">2100</span>
<span class="t k" style="left:729.70px;top:287.86px;color:#dcbe8c;transform:scaleX(0.876);">15.50</span>
<span class="t k" style="left:729.70px;top:311.66px;color:#e62020;transform:scaleX(0.876);">0.720</span>
<span class="t k" style="left:285.40px;top:342.86px;color:#dcdc00;transform:scaleX(0.828);">CPU Usage</span>
<span class="t k" style="left:323.60px;top:342.86px;color:#e6e6e6;transform:scaleX(0.679);">|</span>
<span class="t k" style="left:329.30px;top:342.86px;color:#e01010;transform:scaleX(0.890);">CPU Throttling (max: 24%) - Overheating Detected!</span>
<span class="t k" style="left:28.20px;top:352.16px;color:#e8e8e8;transform:scaleX(0.822);">100%</span>
<span class="t k" style="left:35.10px;top:516.36px;color:#e8e8e8;transform:scaleX(0.859);">0%</span>
<span class="t k" style="left:730.40px;top:352.61px;color:#dcdc00;transform:scaleX(0.817);">100%</span>
<span class="t k" style="left:730.00px;top:516.26px;color:#e01010;transform:scaleX(0.798);">0%</span>
<div style="left:1px;top:19px;width:0.9px;height:579px;background:#fff"></div>
<div style="left:773.1px;top:19px;width:0.9px;height:579px;background:#fff"></div>
<div style="left:1px;top:597.7px;width:773px;height:0.9px;background:#fff"></div>
<div style="left:0;top:0;width:775px;height:0.9px;background:#707070"></div>
<div style="left:0;top:0;width:0.9px;height:600px;background:#9c9c9c"></div>
<div style="left:774px;top:0;width:1px;height:600px;background:#808080"></div>
<div style="left:0;top:598.6px;width:775px;height:1.4px;background:#707070"></div>
</body></html>
